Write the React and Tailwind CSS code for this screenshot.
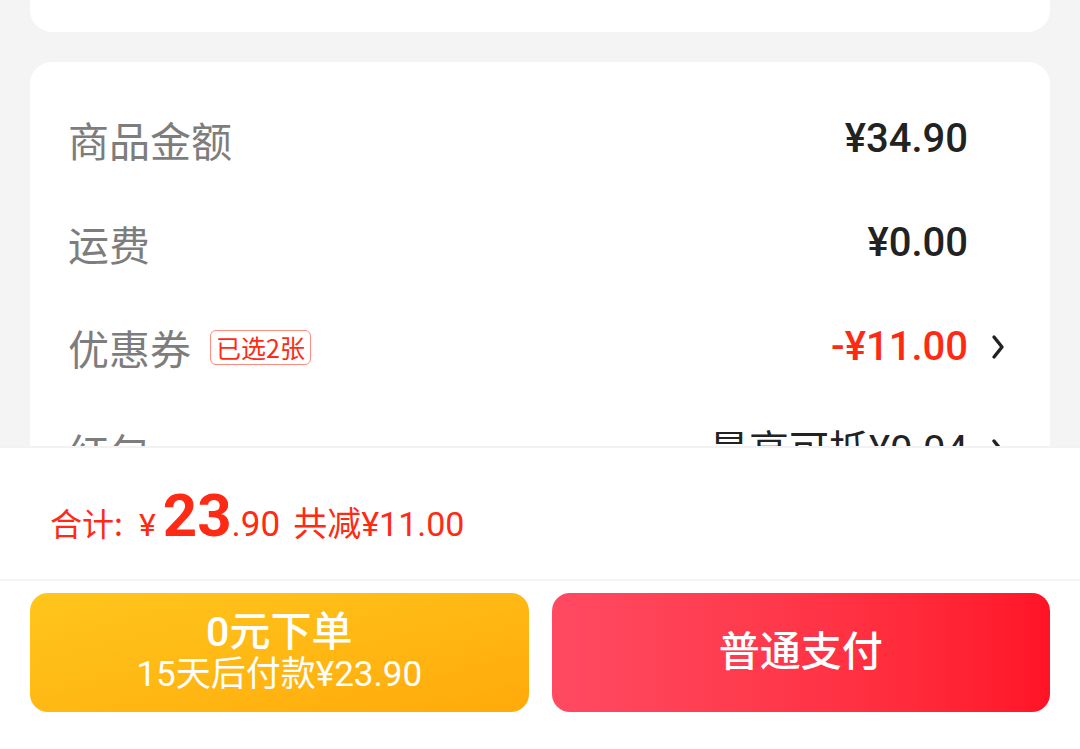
import { useState } from 'react';

const rows = [
  { label: '商品金额', value: '¥34.90' },
  { label: '运费', value: '¥0.00' },
  { label: '优惠券', badge: '已选2张', value: '-¥11.00', red: true, arrow: true },
  { label: '红包', value: '最高可抵¥0.04', arrow: true, plain: true },
];

const Chevron = () => (
  <svg width="14" height="26" viewBox="0 0 14 26" fill="none">
    <path d="M3 3l8 10-8 10" stroke="#222" strokeWidth="3.4" strokeLinecap="round" strokeLinejoin="round" />
  </svg>
);

const App = () => {
  const [payType, setPayType] = useState('normal');

  return (
    <div className="h-screen flex flex-col bg-[#f4f4f4] font-['Roboto','Noto_Sans_CJK_SC',sans-serif] overflow-hidden">
      <div className="flex-1 overflow-hidden">
        <div className="mx-[30px] h-[32px] bg-white rounded-b-[22px]" />

        <div className="mx-[30px] mt-[30px] bg-white rounded-[22px] pt-[25px] pl-[38px] pr-[45px] pb-[20px]">
          {rows.map((row) => (
            <div key={row.label} className="h-[104px] flex items-center justify-between">
              <div className="flex items-center">
                <span className="text-[41px] leading-none text-[#7d7d7d] font-['Noto_Sans_CJK_SC',sans-serif]">
                  {row.label}
                </span>
                {row.badge && (
                  <span className="ml-[19px] h-[35px] px-[5px] flex items-center border border-[#ff8a80] rounded-[6px] text-[25px] leading-none text-[#ff2a14] font-['Noto_Sans_CJK_SC',sans-serif]">
                    {row.badge}
                  </span>
                )}
              </div>
              <div className="flex items-center">
                <span
                  className={
                    row.red
                      ? 'text-[40px] leading-none font-medium text-[#ff2a14]'
                      : row.plain
                      ? 'text-[40px] leading-none text-[#222]'
                      : 'text-[40px] leading-none font-medium text-[#222]'
                  }
                >
                  {row.value}
                </span>
                <span className="w-[37px] flex justify-end">{row.arrow && <Chevron />}</span>
              </div>
            </div>
          ))}
        </div>
      </div>

      <div className="h-[303px] shrink-0 bg-white border-t-[2px] border-[#f2f2f2] flex flex-col">
        <div className="h-[131px] flex items-center pl-[50px] pt-[4px] text-[#ff2a14]">
          <div className="flex items-baseline leading-none">
            <span className="text-[32px] font-['Noto_Sans_CJK_SC',sans-serif]">合计:</span>
            <span className="ml-[16px] text-[32px]">¥</span>
            <span className="ml-[7px] text-[60px] font-bold">23</span>
            <span className="text-[35px]">.90</span>
            <span className="ml-[13px] text-[34px]">共减¥11.00</span>
          </div>
        </div>
        <div className="border-t-[2px] border-[#f4f4f4] flex gap-[23px] px-[30px] pt-[12px]">
          <button
            onClick={() => setPayType('later')}
            className="flex-1 h-[119px] rounded-[18px] bg-gradient-to-br from-[#ffc61c] to-[#ffaa0a] text-white flex flex-col items-center justify-center"
          >
            <span className="text-[41px] leading-[44px] font-medium">0元下单</span>
            <span className="text-[35px] leading-[42px]">15天后付款¥23.90</span>
          </button>
          <button
            onClick={() => setPayType('normal')}
            className="flex-1 h-[119px] rounded-[18px] bg-gradient-to-r from-[#ff4a62] to-[#ff1326] text-white text-[41px] font-medium flex items-center justify-center"
          >
            普通支付
          </button>
        </div>
      </div>
    </div>
  );
};

export default App;
